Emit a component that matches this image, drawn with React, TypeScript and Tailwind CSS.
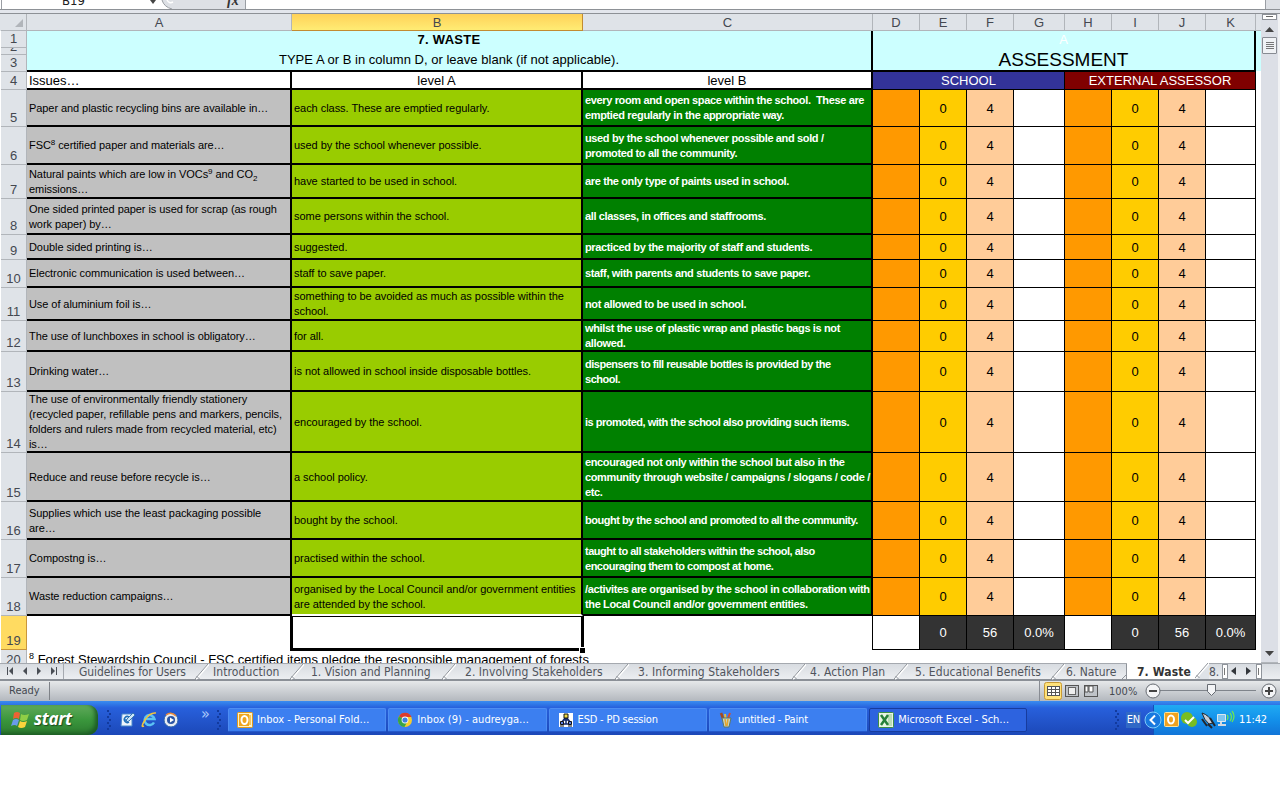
import { ReactNode } from "react";

type Row = {
  n: number;
  height: string;
  issue: ReactNode[];
  a: string[];
  b: string[];
  tight?: boolean;
};

const rows: Row[] = [
  {
    n: 5,
    height: "h-[37px]",
    issue: ["Paper and plastic recycling bins are available in…"],
    a: ["each class. These are emptied regularly."],
    b: ["every room and open space within the school.  These are", "emptied regularly in the appropriate way."],
  },
  {
    n: 6,
    height: "h-[38px]",
    issue: [<>FSC<Sup>8</Sup> certified paper and materials are…</>],
    a: ["used by the school whenever possible."],
    b: ["used by the school whenever possible and sold /", "promoted to all the community."],
  },
  {
    n: 7,
    height: "h-[34px]",
    issue: [
      <>Natural paints which are low in VOCs<Sup>9</Sup> and CO<span className="relative top-[3px] text-[8px]">2</span></>,
      "emissions…",
    ],
    a: ["have started to be used in school."],
    b: ["are the only type of paints used in school."],
  },
  {
    n: 8,
    height: "h-[36px]",
    issue: ["One sided printed paper is used for scrap (as rough", "work paper) by…"],
    a: ["some persons within the school."],
    b: ["all classes, in offices and staffrooms."],
  },
  {
    n: 9,
    height: "h-[25px]",
    issue: ["Double sided printing is…"],
    a: ["suggested."],
    b: ["practiced by the majority of staff and students."],
  },
  {
    n: 10,
    height: "h-[28px]",
    issue: ["Electronic communication is used between…"],
    a: ["staff to save paper."],
    b: ["staff, with parents and students to save paper."],
  },
  {
    n: 11,
    height: "h-[33px]",
    issue: ["Use of aluminium foil is…"],
    a: ["something to be avoided as much as possible within the", "school."],
    b: ["not allowed to be used in school."],
  },
  {
    n: 12,
    height: "h-[31px]",
    issue: ["The use of lunchboxes in school is obligatory…"],
    a: ["for all."],
    b: ["whilst the use of plastic wrap and plastic bags is not", "allowed."],
  },
  {
    n: 13,
    height: "h-[40px]",
    issue: ["Drinking water…"],
    a: ["is not allowed in school inside disposable bottles."],
    b: ["dispensers to fill reusable bottles is provided by the", "school."],
    tight: true,
  },
  {
    n: 14,
    height: "h-[61px]",
    issue: [
      "The use of environmentally friendly stationery",
      "(recycled paper, refillable pens and markers, pencils,",
      "folders and rulers made from recycled material, etc)",
      "is…",
    ],
    a: ["encouraged by the school."],
    b: ["is promoted, with the school also providing such items."],
    tight: true,
  },
  {
    n: 15,
    height: "h-[49px]",
    issue: ["Reduce and reuse before recycle is…"],
    a: ["a school policy."],
    b: ["encouraged not only within the school but also in the", "community through website / campaigns / slogans / code /", "etc."],
  },
  {
    n: 16,
    height: "h-[38px]",
    issue: ["Supplies which use the least packaging possible", "are…"],
    a: ["bought by the school."],
    b: ["bought by the school and promoted to all the community."],
    tight: true,
  },
  {
    n: 17,
    height: "h-[38px]",
    issue: ["Compostng is…"],
    a: ["practised within the school."],
    b: ["taught to all stakeholders within the school, also", "encouraging them to compost at home."],
    tight: true,
  },
  {
    n: 18,
    height: "h-[38px]",
    issue: ["Waste reduction campaigns…"],
    a: ["organised by the Local Council and/or government entities", "are attended by the school."],
    b: ["/activites are organised by the school in collaboration with", "the Local Council and/or government entities."],
  },
];

const columns = [
  { name: "A", width: "w-[265px]" },
  { name: "B", width: "w-[291px]" },
  { name: "C", width: "w-[290px]" },
  { name: "D", width: "w-[47px]" },
  { name: "E", width: "w-[47px]" },
  { name: "F", width: "w-[47px]" },
  { name: "G", width: "w-[51px]" },
  { name: "H", width: "w-[47px]" },
  { name: "I", width: "w-[47px]" },
  { name: "J", width: "w-[47px]" },
  { name: "K", width: "w-[50px]" },
];

function Sup({ children }: { children: ReactNode }) {
  return <span className="relative -top-[4px] text-[8px]">{children}</span>;
}

function RowHeader({ children, active }: { children: ReactNode; active?: boolean }) {
  return (
    <div
      className={`flex w-[26px] shrink-0 items-end justify-center overflow-hidden border-r border-b text-[13px] leading-[16px] text-[#444850] ${
        active ? "border-[#c9963c] bg-[#ffdb61]" : "border-[#b1b5ba] bg-[#dfe3e8]"
      }`}
    >
      {children}
    </div>
  );
}

function Scores() {
  const cell = "flex shrink-0 items-center justify-center border-r border-b border-black pt-px text-[13px]";
  return (
    <>
      <div className={`${cell} w-[47px] bg-[#ff9900]`} />
      <div className={`${cell} w-[47px] bg-[#ffcc00]`}>0</div>
      <div className={`${cell} w-[47px] bg-[#ffcc99]`}>4</div>
    </>
  );
}

function SheetRow({ row }: { row: Row }) {
  const text = "flex shrink-0 flex-col justify-center border-r-2 border-b-2 border-black pt-px pl-[2px] text-[11px] leading-[15px] whitespace-pre";
  return (
    <div className={`flex pl-px ${row.height}`}>
      <RowHeader>{row.n}</RowHeader>
      <div className={`${text} w-[265px] bg-[#c0c0c0] tracking-[-0.07px]`}>
        {row.issue.map((line, i) => (
          <div key={i} className="h-[15px]">{line}</div>
        ))}
      </div>
      <div className={`${text} w-[291px] bg-[#99cc00] tracking-[-0.04px] ${row.n === 18 ? "border-b-white" : ""}`}>
        {row.a.map((line) => (
          <div key={line}>{line}</div>
        ))}
      </div>
      <div className={`${text} w-[290px] bg-[#008000] font-bold text-white ${row.tight ? "tracking-[-0.49px]" : "tracking-[-0.36px]"}`}>
        {row.b.map((line) => (
          <div key={line}>{line}</div>
        ))}
      </div>
      <Scores />
      <div className="w-[51px] shrink-0 border-r border-b border-black" />
      <Scores />
      <div className="w-[50px] shrink-0 border-r border-b border-black" />
    </div>
  );
}

function FormulaBar() {
  return (
    <div className="flex h-[10px] overflow-hidden border-b border-[#8d9196] bg-white pl-px">
      <div className="flex w-[160px] items-end border-l border-[#9a9ea4]">
        <span className="ml-[60px] h-[9px] w-[88px] text-[13px] leading-[1px] text-[#222]" style={{ fontFamily: "'DejaVu Sans Condensed'" }}>
          B19
        </span>
        <svg className="mb-[5px]" width="7" height="4" viewBox="0 0 7 4">
          <path d="M0 0h6L3 4z" fill="#444" />
        </svg>
      </div>
      <svg width="20" height="9" viewBox="0 0 20 9">
        <path d="M1 0Q3 7 11 9H20V0Z" fill="#dde0e5" />
        <path d="M1 0Q3 7 11 9" fill="none" stroke="#999da3" />
        <path d="M6 0Q8 4 12 2" fill="none" stroke="#fff" strokeWidth="1.5" />
      </svg>
      <div className="w-[65px] overflow-hidden border-r border-[#9a9ea4] bg-[#dde0e5] pl-[46px] text-[14px] leading-[1px] font-bold text-[#333] italic" style={{ fontFamily: "'Liberation Serif'" }}>
        fx
      </div>
      <div className="flex-1" />
      <div className="w-[15px] border-l border-[#9a9ea4] bg-[#dde0e5]" />
    </div>
  );
}

function TopBlock() {
  return (
    <div className="flex h-[59px] pl-px">
      <div className="flex w-[26px] flex-col">
        <div className="flex h-[17px]"><RowHeader>1</RowHeader></div>
        <div className="flex h-[7px]">
          <RowHeader><span className="leading-[15px]">2</span></RowHeader>
        </div>
        <div className="flex h-[17px]"><RowHeader>3</RowHeader></div>
        <div className="flex h-[18px]"><RowHeader>4</RowHeader></div>
      </div>
      <div className="w-[846px]">
        <div className="flex h-[41px] flex-col items-center border-r-2 border-b-2 border-black bg-[#ccffff] text-[13px]">
          <div className="h-[19px] leading-[17px] font-bold tracking-[0.3px]">7. WASTE</div>
          <div className="leading-[19px] tracking-[0.02px]">TYPE A or B in column D, or leave blank (if not applicable).</div>
        </div>
        <div className="flex h-[18px] text-[13px] leading-[17px]">
          <div className="w-[265px] border-r-2 border-b-2 border-black pl-[2px]">Issues…</div>
          <div className="w-[291px] border-r-2 border-b-2 border-black text-center">level A</div>
          <div className="w-[290px] border-r-2 border-b-2 border-black text-center">level B</div>
        </div>
      </div>
      <div className="w-[383px]">
        <div className="h-[41px] border-r-2 border-b-2 border-black bg-[#ccffff] text-center">
          <div className="h-[17px] text-[13px] leading-[18px] text-white">A</div>
          <div className="text-[19px] leading-[23px]">ASSESSMENT</div>
        </div>
        <div className="flex h-[18px] text-center text-[13px] leading-[17px] text-white">
          <div className="w-[192px] border-r border-b border-black bg-[#333399]">SCHOOL</div>
          <div className="w-[191px] border-r border-b border-black bg-[#800000]">EXTERNAL ASSESSOR</div>
        </div>
      </div>
      <div className="h-[40px] flex-1 bg-[#ccffff]" />
    </div>
  );
}

function TotalsRow() {
  const dark = "flex shrink-0 items-center justify-center border-r border-b border-black bg-[#333333] text-[13px] text-white";
  return (
    <div className="flex h-[34px] pl-px">
      <RowHeader active>19</RowHeader>
      <div className="w-[264px]" />
      <div className="relative w-[291px]">
        <div className="absolute -left-px h-[35px] w-[294px] border-[3px] border-t border-black" />
        <div className="absolute top-[31px] left-[288px] h-[6px] w-[6px] border-t border-l border-white bg-black" />
      </div>
      <div className="w-[290px]" />
      <div className="w-[48px] border-x border-b border-black" />
      <div className={`${dark} w-[47px]`}>0</div>
      <div className={`${dark} w-[47px]`}>56</div>
      <div className={`${dark} w-[51px]`}>0.0%</div>
      <div className="w-[47px] border-r border-b border-black" />
      <div className={`${dark} w-[47px]`}>0</div>
      <div className={`${dark} w-[47px]`}>56</div>
      <div className={`${dark} w-[50px]`}>0.0%</div>
    </div>
  );
}

function ScrollBar() {
  return (
    <div className="flex w-[19px] flex-col items-center border-r-2 border-[#f1f2f4] bg-[#dcdfe6]">
      <div className="h-[6px] w-[15px] border border-[#8c9097] bg-white px-[3px] pt-[1px]">
        <div className="h-px bg-[#666]" />
      </div>
      <svg className="mt-[7px]" width="9" height="5" viewBox="0 0 9 5"><path d="M0 5L4.500 0 9 5z" fill="#444" /></svg>
      <div className="mt-[5px] flex h-[17px] w-[15px] flex-col items-center justify-center gap-px rounded-[1px] border border-[#878b92] bg-[#f0f2f5]">
        <div className="h-px w-[8px] bg-[#777]" />
        <div className="h-px w-[8px] bg-[#777]" />
        <div className="h-px w-[8px] bg-[#777]" />
        <div className="h-px w-[8px] bg-[#777]" />
      </div>
      <svg className="mt-auto mb-[6px]" width="9" height="5" viewBox="0 0 9 5"><path d="M0 0L4.500 5 9 0z" fill="#444" /></svg>
      <div className="h-px w-full bg-[#b1b5ba]" />
    </div>
  );
}

const tabs = [
  { label: "Guidelines for Users", width: "w-[131px]", pad: "pl-[15px]", track: "tracking-[-0.1px]" },
  { label: "Introduction", width: "w-[95px]", pad: "pl-[18px]", track: "tracking-[0.1px]" },
  { label: "1. Vision and Planning", width: "w-[152px]", pad: "pl-[21px]", track: "tracking-[0px]" },
  { label: "2. Involving Stakeholders", width: "w-[173px]", pad: "pl-[23px]", track: "tracking-[0.05px]" },
  { label: "3. Informing Stakeholders", width: "w-[177px]", pad: "pl-[23px]", track: "tracking-[0.1px]" },
  { label: "4. Action Plan", width: "w-[102px]", pad: "pl-[18px]", track: "tracking-[0.1px]" },
  { label: "5. Educational Benefits", width: "w-[157px]", pad: "pl-[21px]", track: "tracking-[0.05px]" },
];

function Slash({ active }: { active?: boolean }) {
  return (
    <svg className="shrink-0" width="14" height="16" viewBox="0 0 14 16">
      {active && <path d="M0 0h13L0 16z" fill="#fff" />}
      <path d="M1 15L14 0" stroke="#fff" strokeWidth="2" />
      <path d="M0 15L13 0" stroke="#8f949b" />
      <path d="M1.500 12L4.500 15" stroke="#8f949b" />
    </svg>
  );
}

function Splitter() {
  return <div className="h-[15px] w-[6px] shrink-0 border border-[#8f949b] bg-white px-[1px] py-[3px]"><div className="h-full w-px bg-[#777]" /></div>;
}

function SheetTabs() {
  return (
    <div
      className="flex h-[16px] border-t border-[#a5a9af] bg-linear-to-b from-[#d8dce1] to-[#eceef1] pl-px text-[12px] leading-[16px] whitespace-nowrap text-[#50545c]"
      style={{ fontFamily: "'DejaVu Sans Condensed', sans-serif" }}
    >
      <svg className="shrink-0" width="63" height="15" viewBox="0 0 63 15" fill="#4a4e55">
        <path d="M6 3h1v8H6zM12 3v8L8 7zM26 3v8L22 7zM36 3v8L40 7zM50 3v8L54 7zM55 3h1v8h-1z" />
        <path d="M62 0h1v16h-1z" fill="#a5a9af" />
      </svg>
      {tabs.map((tab) => (
        <div key={tab.label} className={`flex shrink-0 justify-between ${tab.width} ${tab.track}`}>
          <span className={tab.pad}>{tab.label}</span>
          <span className="-mr-[14px]"><Slash /></span>
        </div>
      ))}
      <div className="flex w-[76px] justify-between pl-[15px]">
        6. Nature
        <svg width="5" height="16" viewBox="0 0 5 16" fill="none">
          <path d="M4.500 0v15M0 15l4-4" stroke="#8f949b" />
        </svg>
      </div>
      <div className="-mt-px flex h-[16px] w-[82px] justify-between bg-white pl-[10px] leading-[18px] font-bold tracking-[0.1px] text-[#333]">
        7. Waste
        <span className="h-[16px] bg-[#dfe3e8]"><Slash active /></span>
      </div>
      <div className="w-[13px]">8.</div>
      <Splitter />
      <svg width="28" height="15" viewBox="0 0 28 15" fill="#33363b">
        <path d="M8 3v8L3 7zM18 3v8l5-4z" />
      </svg>
      <Splitter />
      <div className="flex-1" />
    </div>
  );
}

function StatusBar() {
  return (
    <div
      className="flex h-[22px] items-center border-t-2 border-[#8b9097] bg-linear-to-b from-[#e6e8ea] to-[#b3b8be] pl-[9px] text-[11px] text-[#444850]"
      style={{ fontFamily: "'DejaVu Sans Condensed', sans-serif" }}
    >
      <span className="w-[40px]">Ready</span>
      <div className="h-[18px] w-px bg-[#7e8288]" />
      <div className="flex-1" />
      <svg width="242" height="20" viewBox="0 0 242 20">
        <path d="M1.500 0v20" stroke="#888c93" />
        <rect x="6.500" y="1.500" width="17" height="17" rx="2" fill="#ffe27a" stroke="#c89a35" />
        <path d="M9.500 5.500h12v9h-12z" fill="#fff" />
        <path d="M9 5.500h13M9 8.500h13M9 11.500h13M9 14.500h13M9.500 5v10M13.500 5v10M17.500 5v10M21.500 5v10" stroke="#555" fill="none" />
        <rect x="27.500" y="4.500" width="13" height="11" fill="#bfc3c8" stroke="#555" />
        <rect x="30.500" y="6.500" width="7" height="7" fill="#eee" stroke="#666" />
        <rect x="46.500" y="4.500" width="13" height="11" fill="#bfc3c8" stroke="#555" />
        <path d="M47 5h3v6h-3zM51 5h4v6h-4z" fill="#fff" stroke="#555" />
        <text x="71" y="14" fontSize="11" fill="#444850">100%</text>
        <path d="M122 9.500h96" stroke="#7f848b" />
        <circle cx="115" cy="10" r="7" fill="#f3f4f6" stroke="#666b72" />
        <path d="M111 10h8" stroke="#444" strokeWidth="2" />
        <path d="M169.500 3.500h8v7l-4 4-4-4z" fill="#f3f4f6" stroke="#666b72" />
        <circle cx="231" cy="10" r="7" fill="#f3f4f6" stroke="#666b72" />
        <path d="M227 10h8M231 6v8" stroke="#444" strokeWidth="2" />
      </svg>
    </div>
  );
}

function Grip() {
  return (
    <svg width="6" height="20" viewBox="0 0 6 20" fill="#123a9e">
      <path d="M1 0h2v2H1zM3 3h2v2H3zM1 6h2v2H1zM3 9h2v2H3zM1 12h2v2H1zM3 15h2v2H3zM1 18h2v2H1z" />
    </svg>
  );
}

function OutlookIcon() {
  return (
    <svg width="16" height="16" viewBox="0 0 16 16">
      <rect x=".5" y=".5" width="15" height="15" rx="1" fill="#fff3c4" stroke="#e39a1c" />
      <path d="M2 2h10v12H2z" fill="#f0a51f" />
      <path d="M12 3h2v10h-2z" fill="#f7c65a" />
      <ellipse cx="7.500" cy="8" rx="3" ry="4" fill="none" stroke="#fff" strokeWidth="2" />
    </svg>
  );
}

function ChromeIcon() {
  return (
    <svg width="16" height="16" viewBox="0 0 16 16">
      <circle cx="8" cy="8" r="7" fill="#f6cc2e" />
      <path d="M8 8L2 4.200A7 7 0 0 1 14.500 5H8z" fill="#db3b2c" />
      <path d="M8 8L2 4.200A7 7 0 0 0 7.500 15L10 10z" fill="#37a448" />
      <circle cx="8" cy="8" r="3.400" fill="#fff" />
      <circle cx="8" cy="8" r="2.600" fill="#3d80df" />
    </svg>
  );
}

function NetworkIcon() {
  return (
    <svg width="14" height="14" viewBox="0 0 14 14">
      <path d="M0 0h14v14H0z" fill="#fff" />
      <path d="M6 5L3 9M8 5l3 4M7 5v6M4 11h6M5 7h4" stroke="#152b6e" strokeWidth="1.500" fill="none" />
      <path d="M5 1h4v4H5z" fill="#f2dc45" stroke="#111" />
      <path d="M1.500 8.500h3v3h-3zM9.500 8.500h3v3h-3z" fill="#5b7be0" stroke="#111" />
      <path d="M1 13h4M9 13h4" stroke="#111" />
    </svg>
  );
}

function PaintIcon() {
  return (
    <svg width="16" height="16" viewBox="0 0 16 16" fill="none">
      <path d="M3 1l3 8" stroke="#a34a21" strokeWidth="2.500" />
      <path d="M7 2l1 8" stroke="#e8be3b" strokeWidth="2" />
      <path d="M12 1L9 9" stroke="#d54d32" strokeWidth="2" />
      <path d="M4 6h9l-2 9H6z" fill="#c5d4c4" stroke="#5c7765" />
      <path d="M7 7l1 7M10 7l-1 7" stroke="#e4a52c" strokeWidth="1.500" />
    </svg>
  );
}

function ExcelIcon() {
  return (
    <svg width="16" height="16" viewBox="0 0 16 16">
      <rect x=".5" y=".5" width="15" height="15" rx="1" fill="#e9f5e4" stroke="#3c8d45" />
      <path d="M10 2h4v12h-4z" fill="#b9dcb5" />
      <path d="M3 3L10 13M10 3L3 13" stroke="#27803a" strokeWidth="2.500" />
    </svg>
  );
}

const tasks = [
  { label: "Inbox - Personal Fold…", icon: <OutlookIcon />, track: "tracking-[0px]" },
  { label: "Inbox (9) - audreyga…", icon: <ChromeIcon />, track: "tracking-[0.05px]" },
  { label: "ESD - PD session", icon: <NetworkIcon />, track: "tracking-[-0.2px]" },
  { label: "untitled - Paint", icon: <PaintIcon />, track: "tracking-[-0.15px]" },
  { label: "Microsoft Excel - Sch…", icon: <ExcelIcon />, track: "tracking-[-0.05px]", active: true },
];

function TaskBar() {
  return (
    <div
      className="flex h-[34px] bg-linear-to-b from-[#3a8cf0] from-0% via-[#2860dc] via-20% to-[#1c48b8] pl-px text-[11px] text-white"
      style={{ fontFamily: "'DejaVu Sans Condensed', sans-serif" }}
    >
      <div className="mt-[4px] flex h-[30px] w-[97px] items-center rounded-r-[10px] bg-linear-to-b from-[#5faa5b] via-[#3a963c] to-[#2c7a2f] pl-[10px] shadow-[inset_-3px_-2px_4px_#1c5a24]">
        <svg width="20" height="18" viewBox="0 0 20 18">
          <path d="M3 2Q6 0 9 2L8 8Q5 6 2 8z" fill="#ed6333" />
          <path d="M10 3Q13 5 18 3L16 9Q12 11 9 9z" fill="#8fce46" />
          <path d="M2 9Q5 7 8 9L6 15Q4 13 0 15z" fill="#6b9bea" />
          <path d="M9 10Q12 12 16 10L14 16Q10 18 7 16z" fill="#fad33c" />
        </svg>
        <span className="mb-[2px] ml-[3px] text-[17px] font-bold tracking-[-0.3px] italic [text-shadow:1px_1px_1px_#1a4a1c]" style={{ fontFamily: "'Open Sans', sans-serif" }}>
          start
        </span>
      </div>
      <div className="mt-[4px] flex h-[30px] w-[130px] items-center pl-[8px]">
        <Grip />
        <svg className="ml-[7px]" width="62" height="18" viewBox="0 0 62 18" fill="none">
          <path d="M3 3h10v12H2z" fill="#eef5fc" stroke="#4b89cc" />
          <path d="M10 6a3 3 0 1 0 0 5M5 9h6" stroke="#1e70ba" strokeWidth="1.500" />
          <path d="M14 2L8 8l-1 3 3-1 6-6z" fill="#cde7f9" stroke="#3977b5" />
          <path d="M35 11.500a5 5 0 1 1 .500-3.500H26" stroke="#5bc3f4" strokeWidth="2.500" />
          <path d="M25 15Q21 17 26 9T37 2" stroke="#f3c43d" strokeWidth="1.500" />
          <circle cx="52" cy="9" r="7" fill="#e8edf4" stroke="#2b61a8" />
          <circle cx="52" cy="9" r="4" fill="#2a55a5" />
          <path d="M51 6.500v5l4-2.500z" fill="#fff" />
          <path d="M47 4Q52 0 57 5" stroke="#ed893c" strokeWidth="1.500" />
        </svg>
        <span className="mb-[12px] ml-[20px] text-[16px] leading-[12px] text-[#a9c8fa]">»</span>
        <span className="ml-[6px]"><Grip /></span>
      </div>
      <div className="mt-[7px] flex gap-[2px]">
        {tasks.map((task) => (
          <div
            key={task.label}
            className={`flex h-[24px] w-[158.3px] items-center gap-[4px] rounded-[2px] border pl-[8px] whitespace-nowrap ${task.track} ${
              task.active ? "border-[#173c9e] bg-[#2d63df]" : "border-[#4d8df3] border-b-[#2459cc] bg-[#3c7ff0]"
            }`}
          >
            <span className="flex w-[16px] shrink-0 justify-center">{task.icon}</span>
            <span>{task.label}</span>
          </div>
        ))}
      </div>
      <div className="flex-1" />
      <div className="flex items-center gap-[6px] pt-[4px] pr-[12px]">
        <Grip />
        <span className="bg-[#3169c6] px-px tracking-[-0.2px]">EN</span>
      </div>
      <div className="mt-[4px] flex h-[30px] w-[127px] items-center border-l border-[#1450b8] bg-linear-to-b from-[#20aaf2] via-[#1390ea] to-[#1275d8]">
        <svg className="-ml-[10px] shrink-0" width="92" height="20" viewBox="0 0 92 20" fill="none">
          <circle cx="9" cy="10" r="8" fill="#1879df" stroke="#7ecbfa" />
          <path d="M11 5.500L6.500 10l4.500 4.500" stroke="#fff" strokeWidth="2" />
          <rect x="20.500" y="2.500" width="14" height="14" rx="1" fill="#f0a21e" stroke="#fde49c" />
          <ellipse cx="27" cy="9.500" rx="3" ry="4" stroke="#fff" strokeWidth="2" />
          <circle cx="43" cy="8" r="6" fill="#78bd22" />
          <circle cx="48" cy="12" r="5" fill="#78bd22" />
          <path d="M41 10l3 3 6-6" stroke="#fff" strokeWidth="2" />
          <path d="M58 3Q65 5 69 13l-4 1Q60 10 58 3z" fill="#c6ced7" stroke="#22262c" />
          <path d="M58 9l5 7M66 8l5 8M64 14l4 4" stroke="#22262c" strokeWidth="2" />
          <path d="M73.500 4.500h8v7h-8z" fill="#80c6f1" stroke="#dce8ef" />
          <path d="M74 15h8M77 12v3" stroke="#d4d9e0" strokeWidth="2" />
          <path d="M83 5q2 2 0 5M86 3q3 4 0 8M88 1q4 5 0 11" stroke="#6de456" strokeWidth="1.300" />
        </svg>
        <span className="ml-[3px] tracking-[-0.1px]">11:42</span>
      </div>
    </div>
  );
}

export default function App() {
  return (
    <div className="h-[800px] w-[1280px] overflow-hidden bg-white text-black" style={{ fontFamily: "'Liberation Sans', Arial, sans-serif" }}>
      <FormulaBar />
      <div className="h-[4px] border-b border-[#8d9196] bg-[#e3e6ec]" />
      <div className="flex h-[649px]">
        <div className="w-[1261px] overflow-hidden">
          <div className="flex h-[17px] bg-[#dfe3e8] pl-px text-[13px] leading-[17px] text-[#444850]">
            <div className="flex w-[26px] items-end justify-end border-r border-b border-[#b1b5ba] pr-[3px] pb-[3px]">
              <svg width="8" height="8" viewBox="0 0 8 8"><path d="M8 0v8H0z" fill="#b1b5ba" /></svg>
            </div>
            {columns.map((col) => (
              <div
                key={col.name}
                className={`${col.width} shrink-0 border-r border-b text-center ${
                  col.name === "B" ? "border-[#c28b31] bg-linear-to-b from-[#ffd158] to-[#ffec74]" : "border-[#b1b5ba]"
                }`}
              >
                {col.name}
              </div>
            ))}
            <div className="flex-1 border-b border-[#b1b5ba]" />
          </div>
          <TopBlock />
          {rows.map((row) => (
            <SheetRow key={row.n} row={row} />
          ))}
          <TotalsRow />
          <div className="flex h-[13px] overflow-hidden pl-px">
            <div className="flex w-[26px] items-start justify-center border-r border-[#b1b5ba] bg-[#dfe3e8] text-[13px] leading-[20px] text-[#444850]">20</div>
            <div className="pl-[2px] text-[13px] leading-[20px] whitespace-nowrap">
              <span className="relative -top-[5px] text-[9px]">8</span> Forest Stewardship Council - FSC certified items pledge the responsible management of forests
            </div>
          </div>
        </div>
        <ScrollBar />
      </div>
      <SheetTabs />
      <StatusBar />
      <TaskBar />
    </div>
  );
}
